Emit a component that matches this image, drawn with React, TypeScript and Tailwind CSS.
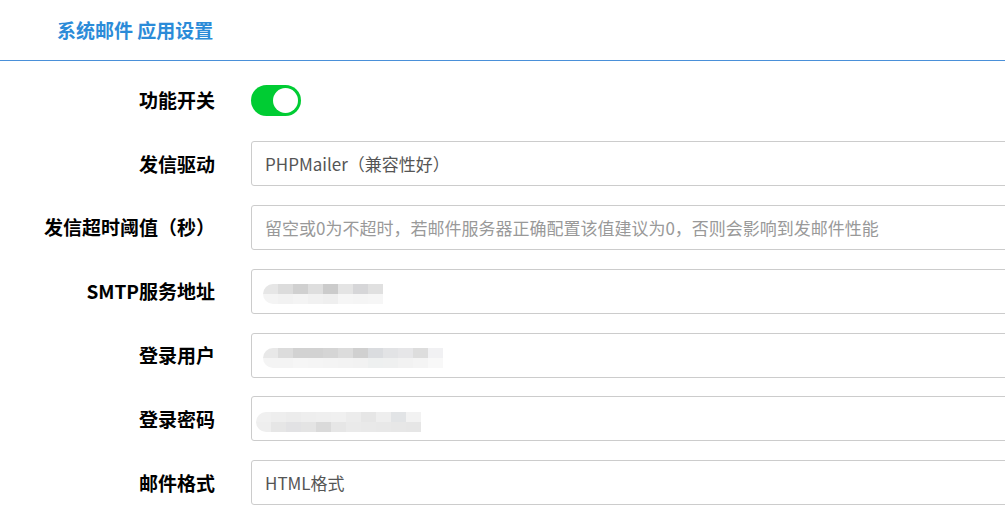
const FONT = "font-['Microsoft_YaHei','Noto_Sans_CJK_SC',sans-serif]";

type Field = {
  label: string;
  value?: string;
  placeholder?: string;
  mosaic?: { top: string[]; bottom: string[]; offset?: number };
};

const fields: Field[] = [
  { label: "发信驱动", value: "PHPMailer（兼容性好）" },
  {
    label: "发信超时阈值（秒）",
    placeholder: "留空或0为不超时，若邮件服务器正确配置该值建议为0，否则会影响到发邮件性能",
  },
  {
    label: "SMTP服务地址",
    mosaic: {
      top: ["#e6e6e6", "#dcdcdc", "#d0d0d0", "#dedede", "#cbcbcb", "#e4e4e4", "#d6d6d8", "#e0e0e0"],
      bottom: ["#f4f4f4", "#f2f2f2", "#f4f4f4", "#f1f1f1", "#efefef", "#f6f6f6", "#f5f5f5", "#f6f6f6"],
      offset: -2,
    },
  },
  {
    label: "登录用户",
    mosaic: {
      top: ["#e8e8e8", "#dcdcdc", "#d2d2d2", "#d2d2d2", "#d5d5d5", "#dcdcdc", "#d0d0d0", "#dadcdf", "#e2e3e5", "#e6e6e8", "#dddddd", "#f1f1f3"],
      bottom: ["#f4f4f4", "#f4f4f4", "#f6f6f6", "#f5f5f5", "#f4f4f4", "#f3f3f3", "#f2f2f2", "#eef0f0", "#eff0f0", "#f2f2f2", "#f4f4f4", "#f8f8f8"],
      offset: -2,
    },
  },
  {
    label: "登录密码",
    mosaic: {
      top: ["#f0f0f0", "#eeeeee", "#ececec", "#eeeeee", "#efefef", "#f0f0f0", "#ececec", "#e6e6e6", "#eeeeee", "#e2e4e6", "#f2f2f2"],
      bottom: ["#eeeeee", "#e6e6e6", "#e2e2e4", "#e4e4e4", "#dadada", "#e6e6e6", "#eaeaea", "#e9e9e9", "#e8e8e8", "#e7e7e7", "#e6e6e6"],
      offset: -9,
    },
  },
  { label: "邮件格式", value: "HTML格式" },
];

function Mosaic({ top, bottom, offset = 0 }: { top: string[]; bottom: string[]; offset?: number }) {
  return (
    <div className="mt-[6px] flex flex-col overflow-hidden rounded-l-[10px]" style={{ marginLeft: offset }}>
      <div className="flex">
        {top.map((c, i) => (
          <div key={i} className="h-[10px] w-[15px]" style={{ background: c }} />
        ))}
      </div>
      <div className="flex">
        {bottom.map((c, i) => (
          <div key={i} className="h-[10px] w-[15px]" style={{ background: c }} />
        ))}
      </div>
    </div>
  );
}

export default function App() {
  return (
    <div className={`h-[524px] w-full overflow-hidden bg-white ${FONT}`}>
      <div className="flex h-[61px] items-center border-b border-[#4a90d9] pl-[57px]">
        <span className="text-[19px] font-bold text-[#2b8bd8]">系统邮件 应用设置</span>
      </div>

      <div className="pt-[17px]">
        <div className="mb-[19.8px] flex h-[44px] items-center">
          <label className="w-[215px] text-right text-[19px] font-bold text-black">功能开关</label>
          <div className="ml-[36px] flex h-[31px] w-[50px] items-center justify-end rounded-full bg-[#00cc33] pr-[3px]">
            <div className="h-[25px] w-[25px] rounded-full bg-white" />
          </div>
        </div>

        {fields.map((f) => (
          <div key={f.label} className="mb-[19.8px] flex h-[44px] items-center">
            <label className="w-[215px] shrink-0 whitespace-nowrap text-right text-[19px] font-bold text-black">
              {f.label}
            </label>
            <div className="-mr-[20px] ml-[36px] flex h-[45px] flex-1 items-center rounded-[3px] border border-[#cccccc] pl-[13px] text-[17px]">
              {f.value && <span className="text-[#555555]">{f.value}</span>}
              {f.placeholder && <span className="whitespace-nowrap text-[#999999]">{f.placeholder}</span>}
              {f.mosaic && <Mosaic {...f.mosaic} />}
            </div>
          </div>
        ))}
      </div>
    </div>
  );
}
